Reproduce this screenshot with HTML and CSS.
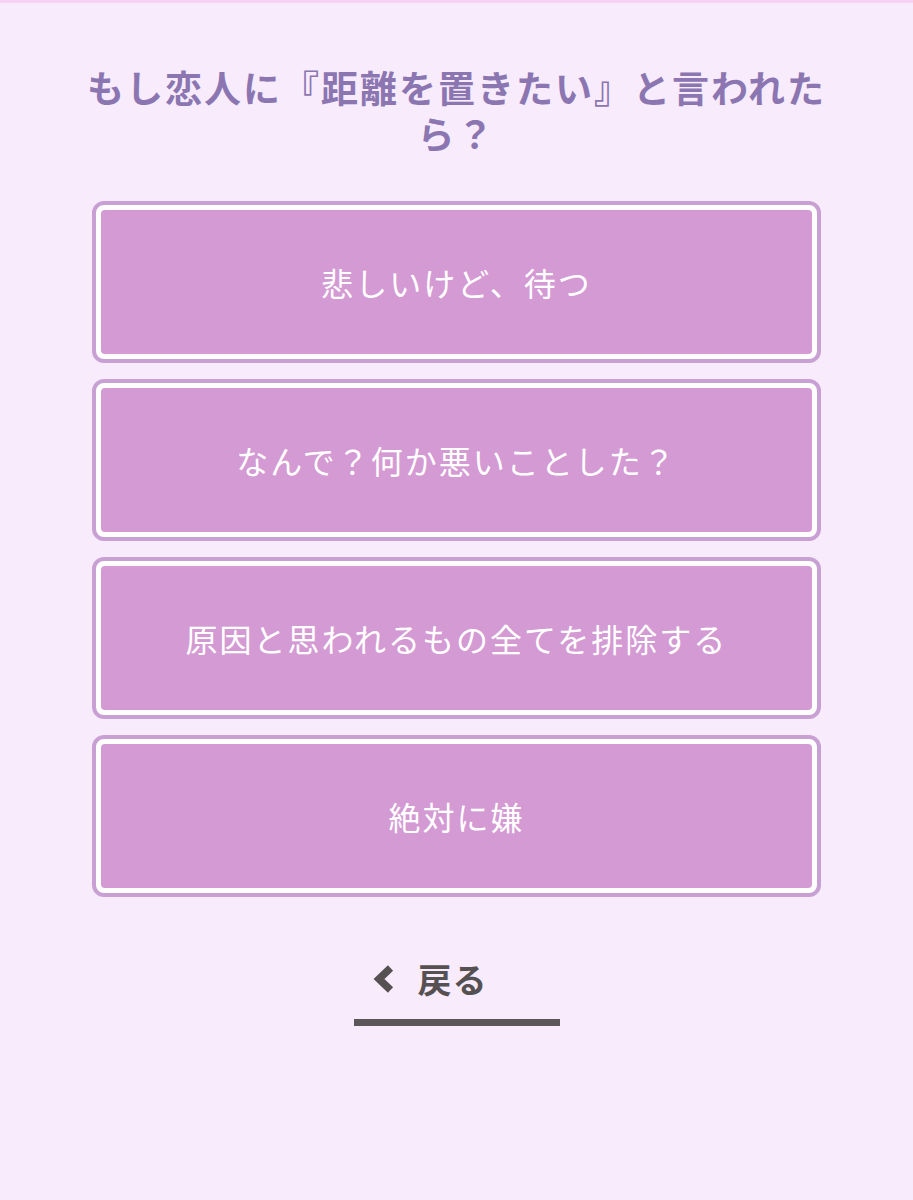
FILE: index.html
```html
<!DOCTYPE html>
<html lang="ja">
<head>
<meta charset="utf-8">
<title>診断</title>
<link rel="stylesheet" href="styles.css">
</head>
<body>
<main class="page">
  <h1 class="question">もし恋人に『距離を置きたい』と言われたら？</h1>
  <div class="options">
    <div class="option"><div class="option-inner">悲しいけど、待つ</div></div>
    <div class="option"><div class="option-inner">なんで？何か悪いことした？</div></div>
    <div class="option"><div class="option-inner">原因と思われるもの全てを排除する</div></div>
    <div class="option"><div class="option-inner">絶対に嫌</div></div>
  </div>
  <div class="back-wrap">
    <a class="back" href="#">
      <svg class="chev" width="24" height="30" viewBox="0 0 24 30" aria-hidden="true">
        <path d="M19.5 4 L8 15 L19.5 26" fill="none" stroke="#555052" stroke-width="7.5" stroke-linejoin="miter" stroke-linecap="butt"/>
      </svg>
      <span class="back-text">戻る</span>
    </a>
  </div>
</main>
</body>
</html>
```
FILE: styles.css
```css
html, body {
  margin: 0;
  padding: 0;
}
body {
  background: #f7ebfc;
  border-top: 3px solid #f6d2f5;
  min-height: 1197px;
  font-family: "Noto Sans CJK JP", "Noto Sans", sans-serif;
}
.page {
  width: 729px;
  margin: 0 auto;
  padding-top: 61px;
  display: flex;
  flex-direction: column;
  align-items: center;
}
.question {
  margin: 0 -20px;
  width: 769px;
  text-align: center;
  font-size: 37px;
  line-height: 46px;
  font-weight: 700;
  letter-spacing: 2px;
  color: #8b76b1;
}
.options {
  margin-top: 45px;
  width: 100%;
  display: flex;
  flex-direction: column;
  gap: 16px;
}
.option {
  border: 4px solid #c9a0d4;
  border-radius: 12px;
  background: #ffffff;
  padding: 5px;
}
.option-inner {
  height: 144px;
  background: #d49ad3;
  border-radius: 4px;
  display: flex;
  align-items: center;
  justify-content: center;
  color: #ffffff;
  font-size: 32px;
  letter-spacing: 2px;
  font-weight: 400;
}
.back-wrap {
  margin-top: 62px;
  display: flex;
  justify-content: center;
}
.back {
  display: inline-flex;
  align-items: center;
  gap: 23px;
  padding: 0 72px 20px 17px;
  border-bottom: 7px solid #5b5657;
  text-decoration: none;
  color: #555052;
}
.chev {
  display: block;
  flex-shrink: 0;
}
.back-text {
  font-size: 34px;
  line-height: 40px;
  font-weight: 700;
  letter-spacing: 1px;
}
```
